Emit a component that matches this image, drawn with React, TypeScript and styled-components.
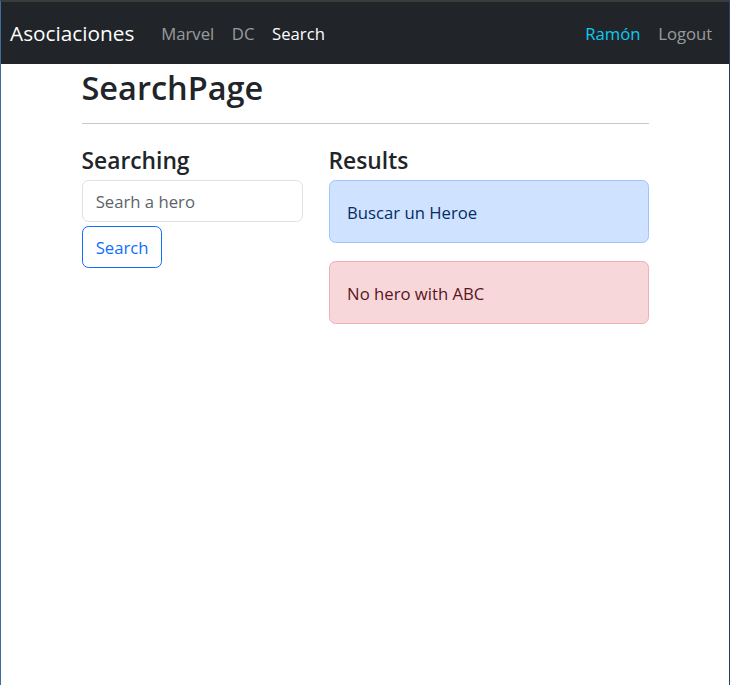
import React from "react";
import styled, { createGlobalStyle } from "styled-components";

const GlobalStyle = createGlobalStyle`
  html, body { margin: 0; padding: 0; background: #fff; }
  body {
    font-family: "Open Sans", "Noto Sans", sans-serif;
    font-size: 16.7px;
    line-height: 1.5;
    color: #212529;
  }
  * { box-sizing: border-box; }
`;

const Frame = styled.div`
  min-height: 685px;
  border-top: 2px solid #3c3c3c;
  border-left: 1px solid #3f6d9e;
  border-right: 1px solid #2c3a6c;
  background: #fff;
`;

const Navbar = styled.nav`
  height: 62px;
  background: #212529;
  display: flex;
  align-items: center;
  padding: 2px 8px 0 9px;
`;

const Brand = styled.a`
  font-size: 20.8px;
  color: #fff;
  margin-right: 18px;
  text-decoration: none;
`;

const NavGroup = styled.div<{ $right?: boolean }>`
  display: flex;
  align-items: center;
  margin-left: ${(p) => (p.$right ? "auto" : "0")};
`;

const NavLink = styled.a<{ $tone?: "active" | "info" | "muted" }>`
  font-size: 16.7px;
  padding: 8.8px 8.8px;
  text-decoration: none;
  color: ${(p) =>
    p.$tone === "active"
      ? "#ffffff"
      : p.$tone === "info"
      ? "#0dcaf0"
      : "rgba(255,255,255,0.55)"};
`;

const Container = styled.main`
  width: 567px;
  margin: 0 auto;
  padding-top: 4px;
`;

const Title = styled.h1`
  font-size: 32.5px;
  font-weight: 600;
  line-height: 1.2;
  margin: 0 0 8.8px;
`;

const Rule = styled.hr`
  border: 0;
  border-top: 1px solid #c8c9ca;
  margin: 16px 0 23px;
`;

const Row = styled.div`
  display: grid;
  grid-template-columns: 222px 320px;
  column-gap: 25px;
  align-items: start;
`;

const Col = styled.section`
  display: flex;
  flex-direction: column;
  align-items: flex-start;
`;

const SubTitle = styled.h4`
  font-size: 22.8px;
  font-weight: 600;
  line-height: 1.2;
  margin: 0 0 6px;
`;

const Input = styled.input`
  width: 221px;
  height: 42px;
  padding: 6.6px 13.2px;
  font: inherit;
  font-size: 16.7px;
  color: #212529;
  border: 1px solid #dee2e6;
  border-radius: 6.6px;
  background: #fff;
  &::placeholder { color: #5c636a; }
`;

const Button = styled.button`
  margin-top: 4px;
  height: 42px;
  width: 80px;
  padding: 0 13.2px;
  font: inherit;
  font-size: 16.7px;
  color: #0d6efd;
  background: #fff;
  border: 1px solid #0d6efd;
  border-radius: 6.6px;
`;

const Alert = styled.div<{ $variant: "primary" | "danger" }>`
  width: 320px;
  height: 63px;
  padding: 2px 17.6px 0;
  display: flex;
  align-items: center;
  margin-bottom: 18px;
  border-radius: 6.6px;
  border: 1px solid ${(p) => (p.$variant === "primary" ? "#9ec5fe" : "#f1aeb5")};
  background: ${(p) => (p.$variant === "primary" ? "#cfe2ff" : "#f8d7da")};
  color: ${(p) => (p.$variant === "primary" ? "#052c65" : "#58151c")};
  font-size: 16.7px;
`;

export default function App() {
  return (
    <>
      <GlobalStyle />
      <Frame>
        <Navbar>
          <Brand>Asociaciones</Brand>
          <NavGroup>
            <NavLink>Marvel</NavLink>
            <NavLink>DC</NavLink>
            <NavLink $tone="active">Search</NavLink>
          </NavGroup>
          <NavGroup $right>
            <NavLink $tone="info">Ramón</NavLink>
            <NavLink>Logout</NavLink>
          </NavGroup>
        </Navbar>
        <Container>
          <Title>SearchPage</Title>
          <Rule />
          <Row>
            <Col>
              <SubTitle>Searching</SubTitle>
              <Input placeholder="Searh a hero" />
              <Button>Search</Button>
            </Col>
            <Col>
              <SubTitle>Results</SubTitle>
              <Alert $variant="primary">Buscar un Heroe</Alert>
              <Alert $variant="danger">No hero with ABC</Alert>
            </Col>
          </Row>
        </Container>
      </Frame>
    </>
  );
}
